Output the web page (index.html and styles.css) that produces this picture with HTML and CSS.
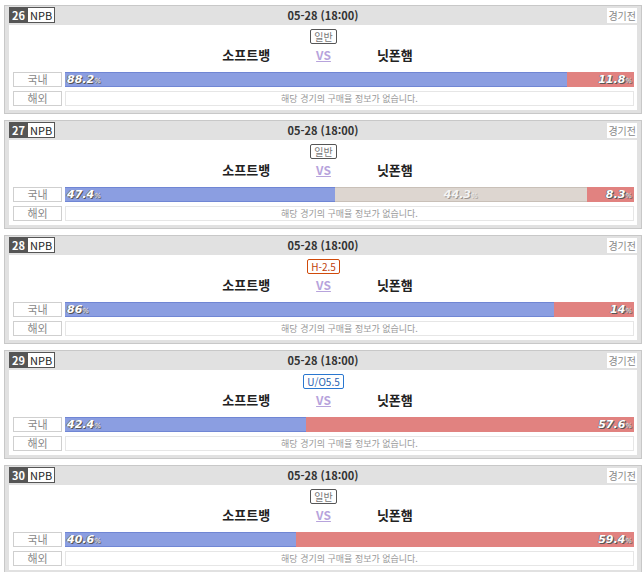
FILE: index.html
```html
<!DOCTYPE html>
<html lang="ko">
<head>
  <meta charset="UTF-8" />
  <title>NPB 구매율</title>
  <link rel="stylesheet" href="styles.css">
</head>
<body>

  <div class="game">
    <div class="game-head">
      <span class="no"><b>26</b><span>NPB</span></span>
      <span class="date">05-28 (18:00)</span>
      <span class="state">경기전</span>
    </div>
    <div class="game-body">
      <div class="type"><span class="tag tag-normal">일반</span></div>
      <div class="teams"><span class="home">소프트뱅</span><span class="vs">VS</span><span class="away">닛폰햄</span></div>
      <div class="row">
        <span class="lbl">국내</span>
        <div class="bar">
          <div class="seg win" style="width: 88.2%"><em>88.2<small>%</small></em></div>
          <div class="seg lose" style="width: 11.8%"><em>11.8<small>%</small></em></div>
        </div>
      </div>
      <div class="row">
        <span class="lbl">해외</span>
        <div class="empty">해당 경기의 구매율 정보가 없습니다.</div>
      </div>
    </div>
  </div>

  <div class="game">
    <div class="game-head">
      <span class="no"><b>27</b><span>NPB</span></span>
      <span class="date">05-28 (18:00)</span>
      <span class="state">경기전</span>
    </div>
    <div class="game-body">
      <div class="type"><span class="tag tag-normal">일반</span></div>
      <div class="teams"><span class="home">소프트뱅</span><span class="vs">VS</span><span class="away">닛폰햄</span></div>
      <div class="row">
        <span class="lbl">국내</span>
        <div class="bar">
          <div class="seg win" style="width: 47.4%"><em>47.4<small>%</small></em></div>
          <div class="seg draw" style="width: 44.3%"><em>44.3<small>%</small></em></div>
          <div class="seg lose" style="width: 8.3%"><em>8.3<small>%</small></em></div>
        </div>
      </div>
      <div class="row">
        <span class="lbl">해외</span>
        <div class="empty">해당 경기의 구매율 정보가 없습니다.</div>
      </div>
    </div>
  </div>

  <div class="game">
    <div class="game-head">
      <span class="no"><b>28</b><span>NPB</span></span>
      <span class="date">05-28 (18:00)</span>
      <span class="state">경기전</span>
    </div>
    <div class="game-body">
      <div class="type"><span class="tag tag-handi">H-2.5</span></div>
      <div class="teams"><span class="home">소프트뱅</span><span class="vs">VS</span><span class="away">닛폰햄</span></div>
      <div class="row">
        <span class="lbl">국내</span>
        <div class="bar">
          <div class="seg win" style="width: 86%"><em>86<small>%</small></em></div>
          <div class="seg lose" style="width: 14%"><em>14<small>%</small></em></div>
        </div>
      </div>
      <div class="row">
        <span class="lbl">해외</span>
        <div class="empty">해당 경기의 구매율 정보가 없습니다.</div>
      </div>
    </div>
  </div>

  <div class="game">
    <div class="game-head">
      <span class="no"><b>29</b><span>NPB</span></span>
      <span class="date">05-28 (18:00)</span>
      <span class="state">경기전</span>
    </div>
    <div class="game-body">
      <div class="type"><span class="tag tag-uo">U/O5.5</span></div>
      <div class="teams"><span class="home">소프트뱅</span><span class="vs">VS</span><span class="away">닛폰햄</span></div>
      <div class="row">
        <span class="lbl">국내</span>
        <div class="bar">
          <div class="seg win" style="width: 42.4%"><em>42.4<small>%</small></em></div>
          <div class="seg lose" style="width: 57.6%"><em>57.6<small>%</small></em></div>
        </div>
      </div>
      <div class="row">
        <span class="lbl">해외</span>
        <div class="empty">해당 경기의 구매율 정보가 없습니다.</div>
      </div>
    </div>
  </div>

  <div class="game">
    <div class="game-head">
      <span class="no"><b>30</b><span>NPB</span></span>
      <span class="date">05-28 (18:00)</span>
      <span class="state">경기전</span>
    </div>
    <div class="game-body">
      <div class="type"><span class="tag tag-normal">일반</span></div>
      <div class="teams"><span class="home">소프트뱅</span><span class="vs">VS</span><span class="away">닛폰햄</span></div>
      <div class="row">
        <span class="lbl">국내</span>
        <div class="bar">
          <div class="seg win" style="width: 40.6%"><em>40.6<small>%</small></em></div>
          <div class="seg lose" style="width: 59.4%"><em>59.4<small>%</small></em></div>
        </div>
      </div>
      <div class="row">
        <span class="lbl">해외</span>
        <div class="empty">해당 경기의 구매율 정보가 없습니다.</div>
      </div>
    </div>
  </div>

</body>
</html>
```

FILE: styles.css
```css
body {
  margin: 5px 0 0 4px;
  font-family: "Noto Sans CJK KR", "Noto Sans", sans-serif;
  font-size: 11px;
  color: #333;
  background: #fff;
}

.game {
  width: 638px;
  box-sizing: border-box;
  border: 1px solid #c8c8c8;
  background: #e1e1e1;
  padding: 0 4px 3px 4px;
  margin-bottom: 6px;
}

.game-head {
  display: grid;
  grid-template-columns: 1fr auto 1fr;
  align-items: center;
  height: 18px;
  padding-bottom: 1px;
}

.no {
  display: flex;
  align-items: center;
  height: 14px;
  justify-self: start;
  border: 1px solid #555;
  line-height: 12px;
  font-size: 11px;
}

.no b {
  background: #555;
  color: #fff;
  padding: 0 3px 0 2px;
  height: 100%;
  display: flex;
  align-items: center;
}

.no span {
  background: #fff;
  color: #222;
  padding: 0 2px;
  height: 100%;
  display: flex;
  align-items: center;
}

.date {
  font-weight: bold;
  font-size: 11px;
  color: #333;
}

.state {
  justify-self: end;
  background: #fff;
  color: #888;
  font-size: 10px;
  line-height: 15px;
  padding: 0 1px;
}

.game-body {
  background: #fff;
  padding: 4px 3px 4px 4px;
}

.type {
  display: flex;
  justify-content: center;
  height: 15px;
}

.tag {
  border: 1px solid #555;
  border-radius: 2px;
  font-size: 10px;
  line-height: 13px;
  padding: 0 3px;
  color: #777;
}

.tag-handi {
  border-color: #d04a0a;
  color: #c0400a;
}

.tag-uo {
  border-color: #2a77d0;
  color: #1f5fb0;
}

.teams {
  display: grid;
  grid-template-columns: 1fr auto 1fr;
  column-gap: 46px;
  align-items: center;
  height: 20px;
  margin-bottom: 8px;
  font-size: 13px;
  font-weight: bold;
  color: #222;
}

.home {
  text-align: right;
}

.vs {
  color: #b7a3dc;
  text-decoration: underline;
  font-size: 12px;
}

.row {
  display: flex;
  gap: 3px;
  height: 15px;
  margin-bottom: 4px;
}

.row:last-child {
  margin-bottom: 0;
}

.lbl {
  width: 49px;
  box-sizing: border-box;
  flex-shrink: 0;
  border: 1px solid #cfcfcf;
  color: #888;
  text-align: center;
  font-size: 11px;
  line-height: 13px;
}

.bar {
  flex: 1;
  display: flex;
}

.seg {
  box-sizing: border-box;
  height: 15px;
  display: flex;
  align-items: center;
  padding: 0 2px;
}

.seg em {
  font-style: italic;
  font-weight: bold;
  font-size: 11px;
  color: #fff;
  text-shadow: 1px 1px 0 #555, -1px 0 0 #777;
  font-family: "DejaVu Sans", sans-serif;
}

.seg small {
  font-size: 7px;
  font-weight: normal;
  color: #eee;
}

.win {
  background: #8b9ee1;
  border-top: 1px solid #7086d4;
  border-bottom: 1px solid #7086d4;
}

.draw {
  background: #ddd6d0;
  border-top: 1px solid #c9c0b8;
  border-bottom: 1px solid #c9c0b8;
  justify-content: center;
}

.draw em {
  color: #f4f4f4;
  text-shadow: 1px 1px 0 #9a948f;
}

.lose {
  background: #e18280;
  justify-content: flex-end;
}

.empty {
  flex: 1;
  border: 1px solid #e6e6e6;
  color: #999;
  font-size: 9px;
  line-height: 13px;
  text-align: center;
}
```
